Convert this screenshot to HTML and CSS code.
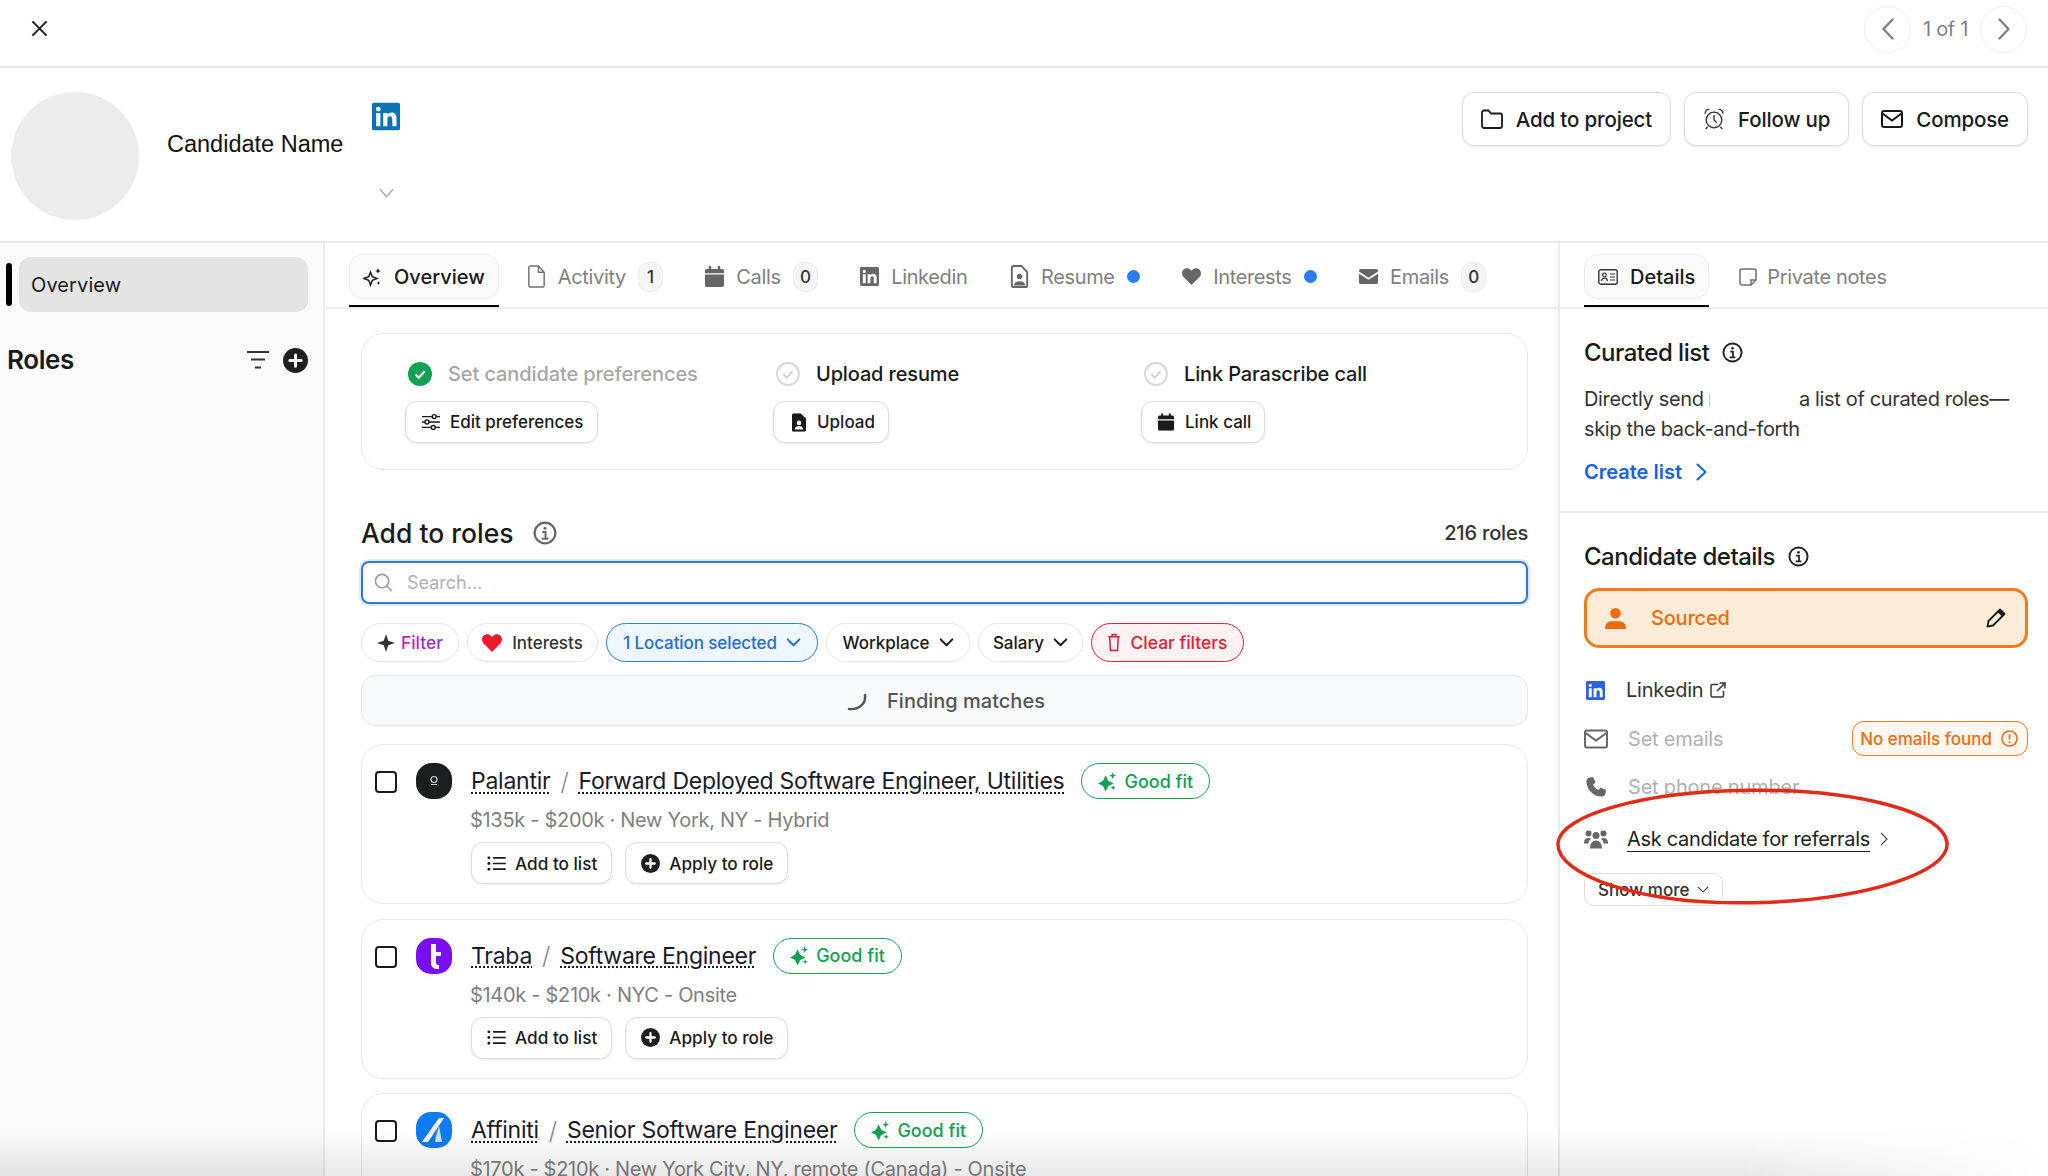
FILE: index.html
```html
<!DOCTYPE html>
<html lang="en">
<head>
<meta charset="utf-8">
<title>Candidate Name</title>
<link rel="stylesheet" href="styles.css">
</head>
<body>
<svg class="sprite" aria-hidden="true">
  <symbol id="i-list" viewBox="0 0 20 20"><g fill="none" stroke="currentColor" stroke-width="1.8" stroke-linecap="round"><path d="M7 4h12M7 10h12M7 16h12"/></g><g fill="currentColor"><circle cx="2" cy="4" r="1.5"/><circle cx="2" cy="10" r="1.5"/><circle cx="2" cy="16" r="1.5"/></g></symbol>
  <symbol id="i-plus" viewBox="0 0 20 20"><circle cx="10" cy="10" r="10" fill="#1f1f1f"/><path d="M10 5.500v9M5.500 10h9" stroke="#fff" stroke-width="2.400" stroke-linecap="round"/></symbol>
  <symbol id="i-spark" viewBox="0 0 20 20"><path fill="currentColor" d="M8 3.500l2.700 5.800 5.800 2.700-5.800 2.700L8 20.500l-2.700-5.800L0 12l5.300-2.700zM15.500 0l1 2.800 2.700 1-2.700 1-1 2.800-1-2.800-2.700-1 2.700-1zM16 14l.8 1.800 1.800.8-1.800.8L16 19l-.8-1.600-1.800-.8 1.800-.8z"/></symbol>
  <symbol id="i-info" viewBox="0 0 22 22"><circle cx="11" cy="11" r="9.500" fill="none" stroke="currentColor" stroke-width="2"/><circle cx="11" cy="6.600" r="1.400" fill="currentColor"/><path d="M8.500 10h3v6M8 16.200h6" fill="none" stroke="currentColor" stroke-width="1.800"/></symbol>
  <symbol id="i-cal" viewBox="0 0 20 22"><path fill="currentColor" d="M4 0h2.500v3h7V0H16v3h2a2 2 0 0 1 2 2v2.500H0V5a2 2 0 0 1 2-2h2zM0 9h20v11a2 2 0 0 1-2 2H2a2 2 0 0 1-2-2z"/></symbol>
  <symbol id="i-check" viewBox="0 0 24 24"><circle cx="12" cy="12" r="11" fill="none" stroke="#d6d6d6" stroke-width="1.800"/><path d="M7.500 12.500l3.200 3.200 6-6.500" fill="none" stroke="#c8c8c8" stroke-width="1.500"/></symbol>
  <symbol id="i-chev" viewBox="0 0 16 10"><path d="M1.500 1.500L8 8l6.500-6.500" fill="none" stroke="currentColor" stroke-width="2.200" stroke-linecap="round" stroke-linejoin="round"/></symbol>
  <symbol id="i-docperson" viewBox="0 0 18 24"><path fill="currentColor" d="M2.500 0H11l7 7v14.500a2.500 2.500 0 0 1-2.500 2.500h-13A2.500 2.500 0 0 1 0 21.500v-19A2.500 2.500 0 0 1 2.500 0z"/><circle cx="9" cy="12.500" r="3" fill="#fff"/><path fill="#fff" d="M3.500 21c.5-3 2.500-4.500 5.500-4.500s5 1.500 5.500 4.500z"/></symbol>
  <symbol id="i-li" viewBox="0 0 20 20"><path fill="currentColor" fill-rule="evenodd" d="M1.500 0h17A1.500 1.500 0 0 1 20 1.500v17a1.500 1.500 0 0 1-1.500 1.500h-17A1.500 1.500 0 0 1 0 18.500v-17A1.500 1.500 0 0 1 1.500 0zM3 7.500V17h3V7.500zM4.500 3a1.700 1.700 0 1 0 0 3.400 1.700 1.700 0 0 0 0-3.400zM8 7.500V17h3v-5c0-1.500.7-2.200 1.800-2.200s1.700.7 1.700 2.200v5h3v-5.800c0-2.700-1.400-4-3.500-4-1.300 0-2.400.6-3 1.500V7.500z"/></symbol>
</svg>

<div class="page">
  <header class="topbar">
    <svg class="close" viewBox="0 0 18 18"><path d="M1.500 1.500l15 15M16.500 1.500l-15 15" stroke="#1a1a1a" stroke-width="2" fill="none"/></svg>
    <nav class="pager">
      <span class="pager-btn"><svg class="pager-ico" viewBox="0 0 12 22"><path d="M10.500 1.500L1.500 11l9 9.500" fill="none" stroke="#808080" stroke-width="2.400" stroke-linecap="round" stroke-linejoin="round"/></svg></span>
      <span class="pager-text">1 of 1</span>
      <span class="pager-btn"><svg class="pager-ico" viewBox="0 0 12 22"><path d="M1.500 1.500l9 9.500-9 9.500" fill="none" stroke="#808080" stroke-width="2.400" stroke-linecap="round" stroke-linejoin="round"/></svg></span>
    </nav>
  </header>

  <section class="profile">
    <div class="avatar"></div>
    <div class="name">Candidate Name</div>
    <div class="profile-links">
      <svg class="li-logo" viewBox="0 0 20 20"><use href="#i-li"/></svg>
      <svg class="profile-chev" viewBox="0 0 16 10"><path d="M1 1l7 8 7-8" fill="none" stroke="#a8a8a8" stroke-width="1.300"/></svg>
    </div>
    <div class="profile-actions">
      <button class="btn-lg"><svg class="ico-22" viewBox="0 0 22 20"><path d="M1 3.500A2 2 0 0 1 3 1.500h4.500l2.500 3h9a2 2 0 0 1 2 2V17a2 2 0 0 1-2 2H3a2 2 0 0 1-2-2z" fill="none" stroke="#1a1a1a" stroke-width="1.800"/></svg>Add to project</button>
      <button class="btn-lg"><svg class="ico-22" viewBox="0 0 22 24"><g fill="none" stroke="#333" stroke-width="1.500"><circle cx="11" cy="13" r="8.500"/><path d="M11 7.500V13l3 3M1.500 6.500C1 3.500 3 1.500 6 1.500M20.500 6.500C21 3.500 19 1.500 16 1.500M4 20.500l-2 2.500M18 20.500l2 2.500"/></g></svg>Follow up</button>
      <button class="btn-lg"><svg class="ico-22" viewBox="0 0 22 18"><path d="M1 3a2 2 0 0 1 2-2h16a2 2 0 0 1 2 2v12a2 2 0 0 1-2 2H3a2 2 0 0 1-2-2zM1.500 3.500L11 10.500l9.500-7" fill="none" stroke="#1a1a1a" stroke-width="2"/></svg>Compose</button>
    </div>
  </section>

  <main class="columns">
    <aside class="sidebar">
      <div class="side-row">
        <span class="side-bar"></span>
        <span class="side-item">Overview</span>
      </div>
      <div class="roles-head">
        <h2 class="roles-title">Roles</h2>
        <svg class="filter-ico" viewBox="0 0 22 18"><path d="M0 1h22M4 8.500h14M8 16.500h6" stroke="#333" stroke-width="2" fill="none"/></svg>
        <svg class="plus-24" viewBox="0 0 20 20"><use href="#i-plus"/></svg>
      </div>
    </aside>

    <section class="center">
      <div class="tabs">
        <div class="tab-wrap tab-wrap-first"><span class="tab-pill"><svg class="tab-spark" viewBox="0 0 20 20"><path fill="none" stroke="#1a1a1a" stroke-width="1.500" d="M7.500 5l1.800 4.700 4.700 1.800-4.700 1.800L7.500 18l-1.800-4.700L1 11.500l4.700-1.800z"/><path fill="#1a1a1a" d="M15 1l.8 2.200L18 4l-2.200.8L15 7l-.8-2.200L12 4l2.200-.8zM15.500 14l.6 1.400 1.400.6-1.400.6-.6 1.400-.6-1.400-1.400-.6 1.400-.6z"/></svg>Overview</span></div>
        <span class="tab"><svg class="tab-ico" viewBox="0 0 18 24"><path d="M3 1h8l6 6.500V21a2 2 0 0 1-2 2H3a2 2 0 0 1-2-2V3a2 2 0 0 1 2-2zM11 1v6.500h6" fill="none" stroke="#707070" stroke-width="1.500"/></svg>Activity<span class="count">1</span></span>
        <span class="tab"><svg class="tab-ico" viewBox="0 0 20 22"><use href="#i-cal"/></svg>Calls<span class="count">0</span></span>
        <span class="tab"><svg class="tab-ico" viewBox="0 0 20 20"><use href="#i-li"/></svg>Linkedin</span>
        <span class="tab"><svg class="tab-ico" viewBox="0 0 18 24"><path d="M3 1h8l6 6.500V21a2 2 0 0 1-2 2H3a2 2 0 0 1-2-2V3a2 2 0 0 1 2-2z" fill="none" stroke="#666" stroke-width="2"/><circle cx="9" cy="12" r="2.800" fill="#666"/><path d="M3 21.500c.5-3.500 3-4.500 6-4.500s5.500 1 6 4.500z" fill="#666"/></svg>Resume<span class="dot"></span></span>
        <span class="tab"><svg class="tab-ico" viewBox="0 0 20 18"><path fill="currentColor" d="M10 18L1.600 9.500C-.5 7.300-.5 3.800 1.600 1.700c2.100-2.100 5.500-2 7.500.2L10 2.900l.9-1c2-2.200 5.400-2.300 7.500-.2 2.100 2.100 2.100 5.600 0 7.800z"/></svg>Interests<span class="dot"></span></span>
        <span class="tab tab-last"><svg class="tab-ico" viewBox="0 0 20 16"><path fill="currentColor" d="M2 0h16a2 2 0 0 1 2 2v.8l-10 6.400L0 2.800V2a2 2 0 0 1 2-2zM0 5l10 6.400L20 5v9a2 2 0 0 1-2 2H2a2 2 0 0 1-2-2z"/></svg>Emails<span class="count">0</span></span>
      </div>

      <div class="center-body">
        <div class="steps">
          <div class="step">
            <div class="step-head"><svg class="step-check" viewBox="0 0 24 24"><circle cx="12" cy="12" r="12" fill="#12a150"/><path d="M7.500 12.500l3.200 3.200 6-6.500" fill="none" stroke="#fff" stroke-width="2.200"/></svg><span class="step-text step-done">Set candidate preferences</span></div>
            <button class="btn-sm"><svg class="ico-18" viewBox="0 0 20 18"><g fill="none" stroke="#1a1a1a" stroke-width="1.600"><path d="M0 3h11M16 3h4M0 9h3M8 9h12M0 15h10M15 15h5"/><circle cx="13.500" cy="3" r="2.200"/><circle cx="5.500" cy="9" r="2.200"/><circle cx="12.500" cy="15" r="2.200"/></g></svg>Edit preferences</button>
          </div>
          <div class="step">
            <div class="step-head"><svg class="step-check" viewBox="0 0 24 24"><use href="#i-check"/></svg><span class="step-text">Upload resume</span></div>
            <button class="btn-sm btn-upload"><svg class="ico-14" viewBox="0 0 18 24"><use href="#i-docperson"/></svg>Upload</button>
          </div>
          <div class="step">
            <div class="step-head"><svg class="step-check" viewBox="0 0 24 24"><use href="#i-check"/></svg><span class="step-text">Link Parascribe call</span></div>
            <button class="btn-sm btn-link"><svg class="ico-16" viewBox="0 0 20 22"><use href="#i-cal"/></svg>Link call</button>
          </div>
        </div>

        <div class="add-head">
          <h2 class="h-add">Add to roles</h2>
          <svg class="info-grey" viewBox="0 0 22 22"><use href="#i-info"/></svg>
          <span class="roles-count">216 roles</span>
        </div>

        <div class="search">
          <svg class="search-ico" viewBox="0 0 20 20"><circle cx="8.500" cy="8.500" r="7" fill="none" stroke="#999" stroke-width="1.700"/><path d="M13.500 13.500l5.500 5.500" stroke="#999" stroke-width="1.700"/></svg>
          <span class="search-text">Search...</span>
        </div>

        <div class="chips">
          <span class="chip chip-filter"><svg class="chip-star" viewBox="0 0 16 16"><path fill="#333" d="M8 0l2 6 6 2-6 2-2 6-2-6-6-2 6-2z"/></svg><span class="filter-text">Filter</span></span>
          <span class="chip chip-int"><svg class="chip-heart" viewBox="0 0 20 18"><path fill="#f0192c" d="M10 18L1.600 9.500C-.5 7.300-.5 3.800 1.600 1.700c2.100-2.100 5.500-2 7.500.2L10 2.900l.9-1c2-2.200 5.400-2.300 7.500-.2 2.100 2.100 2.100 5.600 0 7.800z"/></svg>Interests</span>
          <span class="chip chip-loc">1 Location selected<svg class="chip-chev" viewBox="0 0 16 10"><use href="#i-chev"/></svg></span>
          <span class="chip chip-work">Workplace<svg class="chip-chev" viewBox="0 0 16 10"><use href="#i-chev"/></svg></span>
          <span class="chip chip-sal">Salary<svg class="chip-chev" viewBox="0 0 16 10"><use href="#i-chev"/></svg></span>
          <span class="chip chip-clear"><svg class="chip-trash" viewBox="0 0 14 20"><path d="M1 4h12M5 4V1.500h4V4M2.500 4l.8 14.500h7.400L11.500 4" fill="none" stroke="#e01e36" stroke-width="1.600"/></svg>Clear filters</span>
        </div>

        <div class="finding">
          <svg class="spinner" viewBox="0 0 20 20"><path d="M18 2c1 8-5 15-16 14" fill="none" stroke="#555" stroke-width="2.400" stroke-linecap="round"/></svg>
          <span>Finding matches</span>
        </div>

        <article class="role">
          <span class="box"></span>
          <svg class="logo" viewBox="0 0 36 36"><rect width="36" height="36" rx="16" fill="#1c1f20"/><circle cx="18" cy="16.500" r="3" fill="none" stroke="#cfd3d3" stroke-width="1.200"/><path d="M15 21.500h6" stroke="#cfd3d3" stroke-width="1"/></svg>
          <div class="role-main">
            <div class="role-title"><a class="co">Palantir</a><span class="slash">/</span><a class="co job">Forward Deployed Software Engineer, Utilities</a><span class="fit"><svg class="fit-ico" viewBox="0 0 20 20"><use href="#i-spark"/></svg>Good fit</span></div>
            <div class="role-sub">$135k - $200k · New York, NY - Hybrid</div>
            <div class="role-acts">
              <button class="btn-role"><svg class="ico-19" viewBox="0 0 20 20"><use href="#i-list"/></svg>Add to list</button>
              <button class="btn-role"><svg class="ico-19" viewBox="0 0 20 20"><use href="#i-plus"/></svg>Apply to role</button>
            </div>
          </div>
        </article>

        <article class="role">
          <span class="box"></span>
          <svg class="logo" viewBox="0 0 36 36"><rect width="36" height="36" rx="15" fill="#7a0df2"/><path d="M15 6h5v8h5v4h-5v7c0 1.500 1.500 2 3 2v4c-5 .5-8-2-8-6z" fill="#fff"/></svg>
          <div class="role-main">
            <div class="role-title"><a class="co">Traba</a><span class="slash">/</span><a class="co job">Software Engineer</a><span class="fit"><svg class="fit-ico" viewBox="0 0 20 20"><use href="#i-spark"/></svg>Good fit</span></div>
            <div class="role-sub">$140k - $210k · NYC - Onsite</div>
            <div class="role-acts">
              <button class="btn-role"><svg class="ico-19" viewBox="0 0 20 20"><use href="#i-list"/></svg>Add to list</button>
              <button class="btn-role"><svg class="ico-19" viewBox="0 0 20 20"><use href="#i-plus"/></svg>Apply to role</button>
            </div>
          </div>
        </article>

        <article class="role">
          <span class="box"></span>
          <svg class="logo" viewBox="0 0 36 36"><rect width="36" height="36" rx="15" fill="#0f7bf0"/><path d="M23 6h5L12 30H6z" fill="#fff"/><path d="M23 14l3 16h-7l1-6z" fill="#cfe3fb"/></svg>
          <div class="role-main">
            <div class="role-title"><a class="co">Affiniti</a><span class="slash">/</span><a class="co job">Senior Software Engineer</a><span class="fit"><svg class="fit-ico" viewBox="0 0 20 20"><use href="#i-spark"/></svg>Good fit</span></div>
            <div class="role-sub">$170k - $210k · New York City, NY, remote (Canada) - Onsite</div>
          </div>
        </article>
      </div>
    </section>

    <aside class="details">
      <div class="tabs">
        <div class="tab-wrap tab-wrap-details"><span class="tab-pill tab-pill-details"><svg class="det-ico" viewBox="0 0 20 16"><rect x=".8" y=".8" width="18.400" height="14.400" rx="2" fill="none" stroke="#333" stroke-width="1.400"/><circle cx="6.500" cy="6" r="1.800" fill="none" stroke="#333" stroke-width="1.200"/><path d="M3.500 12c.3-2 1.500-2.800 3-2.800s2.700.8 3 2.800M12 5h5M12 8h5M12 11h5" fill="none" stroke="#333" stroke-width="1.200"/></svg>Details</span></div>
        <span class="tab"><svg class="tab-ico" viewBox="0 0 18 18"><path d="M3 1h12a2 2 0 0 1 2 2v9l-5 5H3a2 2 0 0 1-2-2V3a2 2 0 0 1 2-2zM17 12h-5v5" fill="none" stroke="#707070" stroke-width="1.500"/></svg>Private notes</span>
      </div>

      <div class="curated">
        <div class="h-row"><h2 class="h-det">Curated list</h2><svg class="info-dark" viewBox="0 0 22 22"><use href="#i-info"/></svg></div>
        <p class="curated-text">Directly send <span class="redact"></span>a list of curated roles—<br>skip the back-and-forth</p>
        <a class="create">Create list<svg class="create-chev" viewBox="0 0 11 18"><path d="M1.500 1.500L9.500 9l-8 7.500" fill="none" stroke="#1463e0" stroke-width="2" stroke-linecap="round" stroke-linejoin="round"/></svg></a>
      </div>

      <div class="cand">
        <div class="h-row"><h2 class="h-det">Candidate details</h2><svg class="info-dark" viewBox="0 0 22 22"><use href="#i-info"/></svg></div>
        <div class="status">
          <svg class="status-ico" viewBox="0 0 22 22"><circle cx="11" cy="5.500" r="5.500" fill="#f26a0f"/><path d="M0 22c0-5 3-8 6-8h10c3 0 6 3 6 8z" fill="#f26a0f"/></svg>
          <span class="status-text">Sourced</span>
          <svg class="pencil" viewBox="0 0 20 20"><path d="M14 1.500l4.500 4.500L7 17.500l-5.500 1 1-5.500z" fill="none" stroke="#1a1a1a" stroke-width="1.800" stroke-linejoin="round"/><path d="M14 1.500l4.500 4.500-2.500 2.500L11.500 4z" fill="#1a1a1a"/></svg>
        </div>
        <div class="info-row row-li">
          <svg class="li-blue" viewBox="0 0 20 20"><use href="#i-li"/></svg>
          <span class="row-dark">Linkedin</span>
          <svg class="ext" viewBox="0 0 16 16"><path d="M8 2.500H2.500a1.500 1.500 0 0 0-1.500 1.500v9.500A1.500 1.500 0 0 0 2.500 15H12a1.500 1.500 0 0 0 1.500-1.500V9M9.500 1H15v5.500M15 1L7 9" fill="none" stroke="#333" stroke-width="1.500"/></svg>
        </div>
        <div class="info-row row-mail">
          <svg class="row-ico" viewBox="0 0 24 19"><path d="M1 3a2 2 0 0 1 2-2h18a2 2 0 0 1 2 2v13a2 2 0 0 1-2 2H3a2 2 0 0 1-2-2zM1.500 3.500L12 11l10.500-7.500" fill="none" stroke="#666" stroke-width="2"/></svg>
          <span class="row-muted">Set emails</span>
          <span class="warn">No emails found<svg class="warn-ico" viewBox="0 0 18 18"><circle cx="9" cy="9" r="8" fill="none" stroke="#f26a0f" stroke-width="1.600"/><path d="M9 4.500v5.500M9 12v1.800" stroke="#f26a0f" stroke-width="1.800"/></svg></span>
        </div>
        <div class="info-row row-phone">
          <svg class="row-ico" viewBox="0 0 24 24"><path fill="#666" d="M5 .5l3.500-.5 3 6.500-3 2.500c1 3 3.500 5.500 6.500 6.500l2.500-3 6.500 3-.5 3.500c-.3 2.500-2 4.500-4.500 4.500C9 23.500.5 15 .5 5 .5 2.500 2.500.8 5 .5z"/></svg>
          <span class="row-muted">Set phone number</span>
        </div>
        <div class="info-row row-ask">
          <svg class="row-ico" viewBox="0 0 24 19"><g fill="#666"><circle cx="4.500" cy="4" r="3"/><circle cx="19.500" cy="4" r="3"/><circle cx="12" cy="6" r="3.500"/><path d="M0 13c0-3 2-4.500 4.500-4.500 1 0 2 .3 2.800.8C5.500 10.500 4.500 12 4.500 14H0zM24 13c0-3-2-4.500-4.500-4.500-1 0-2 .3-2.800.8 1.800 1.200 2.800 2.700 2.800 4.700H24zM6 19c0-5 2.500-8 6-8s6 3 6 8z"/></g></svg>
          <a class="ask">Ask candidate for referrals</a>
          <svg class="ask-chev" viewBox="0 0 8 14"><path d="M1 1l6 6-6 6" fill="none" stroke="#555" stroke-width="1.300"/></svg>
        </div>
        <button class="show-more">Show more<svg class="show-chev" viewBox="0 0 14 8"><path d="M1 1l6 6 6-6" fill="none" stroke="#333" stroke-width="1.300"/></svg></button>
      </div>
    </aside>
  </main>

  <svg class="annot" viewBox="0 0 400 124"><path d="M4 58C6 30 90 6 196 5c110-1 196 22 199 53 3 30-85 58-197 60C86 120 2 90 4 58z" fill="none" stroke="#e22a17" stroke-width="3.500"/></svg>
  <div class="fade"></div>
</div>
</body>
</html>
```

FILE: styles.css
```css
* { box-sizing: border-box; }
html, body { margin: 0; padding: 0; overflow: hidden; }
body { font-family: "Inter", "Liberation Sans", sans-serif; color: #1a1a1a; background: #fff; }
.sprite { display: none; }
h2, p { margin: 0; font-weight: 500; }
button { font-family: inherit; background: #fff; color: #1a1a1a; cursor: pointer; }
svg { flex: none; display: block; }

.page { position: relative; width: 2048px; height: 1176px; overflow: hidden; background: #fff; }

.topbar { height: 68px; border-bottom: 2px solid #e9e9e9; display: flex; align-items: center; justify-content: space-between; padding: 0 21px 0 31px; }
.close { width: 17px; height: 17px; margin-top: -10px; }
.pager { display: flex; align-items: center; gap: 12px; margin-top: -8px; }
.pager-btn { width: 47px; height: 47px; border: 1.500px solid #eeeeee; border-radius: 50%; display: flex; align-items: center; justify-content: center; }
.pager-ico { width: 12px; height: 22px; }
.pager-text { font-size: 20px; color: #808080; width: 45px; white-space: nowrap; letter-spacing: -0.3px; }

.profile { height: 175px; border-bottom: 2px solid #e9e9e9; display: flex; position: relative; padding: 24px 20px 0 11px; }
.avatar { width: 128px; height: 128px; border-radius: 50%; background: #ececec; }
.name { font-family: "Liberation Sans", Arial, sans-serif; font-size: 23.500px; margin: 38px 0 0 28px; line-height: 28px; color: #111; }
.profile-links { margin: 10px 0 0 29px; }
.li-logo { width: 28px; height: 29px; color: #0a72b5; }
.profile-chev { width: 15px; height: 10px; margin: 57px 0 0 7px; }
.profile-actions { margin-left: auto; display: flex; gap: 13px; }
.btn-lg { height: 54px; border: 1.500px solid #dcdcdc; border-radius: 12px; font-size: 20.500px; font-weight: 500; display: flex; align-items: center; gap: 13px; padding: 0 18px; box-shadow: 0 1px 2px rgba(0,0,0,.08); white-space: nowrap; letter-spacing: -0.15px; }
.ico-22 { width: 22px; height: 22px; }

.columns { display: flex; height: 933px; }
.sidebar { width: 325px; background: #fafafa; border-right: 2px solid #ececec; padding: 14px 15px 0 6px; }
.side-row { display: flex; align-items: center; gap: 7px; }
.side-bar { width: 6px; height: 43px; border-radius: 3px; background: #000; }
.side-item { flex: 1; height: 55px; border-radius: 12px; background: #e4e4e4; display: flex; align-items: center; padding-left: 12px; font-size: 20px; letter-spacing: 0.1px; }
.roles-head { display: flex; align-items: center; margin-top: 31px; padding-left: 1px; }
.roles-title { font-size: 26px; font-weight: 600; letter-spacing: -0.4px; flex: 1; line-height: 34px; }
.filter-ico { width: 22px; height: 18px; margin-right: 14px; }
.plus-24 { width: 25px; height: 25px; }

.center { width: 1233px; overflow: hidden; }
.tabs { height: 66px; border-bottom: 2px solid #ececec; display: flex; align-items: flex-start; padding: 11px 0 0 24px; }
.tab-wrap { height: 53px; margin-right: 28px; border-bottom: 2px solid #000; flex: none; }
.tab-pill { height: 45px; background: #fafafa; border: 1.500px solid #ececec; border-radius: 14px; display: flex; align-items: center; gap: 11px; padding: 0 13px; font-size: 20px; font-weight: 500; white-space: nowrap; }
.tab-spark { width: 20px; height: 20px; }
.tab { height: 45px; display: flex; align-items: center; gap: 12px; font-size: 20px; color: #808080; margin-right: 42.500px; white-space: nowrap; letter-spacing: -0.35px; }
.tab-ico { width: 19px; height: 23px; color: #666; }
.count { width: 25px; height: 30px; border-radius: 11px; border: 1px solid #ececec; background: #f5f5f5; color: #333; font-size: 17px; font-weight: 500; display: flex; align-items: center; justify-content: center; }
.dot { width: 13px; height: 13px; border-radius: 50%; background: #2a7bf6; }
.tab-last { margin-right: 0; }

.center-body { padding: 24px 30px 0 36px; }
.steps { height: 137px; border: 1.500px solid #e8e8e8; border-radius: 22px; display: flex; padding: 27px 0 0 43px; }
.step { width: 368px; }
.step-head { display: flex; align-items: center; gap: 16px; padding-left: 3px; height: 25px; }
.step-check { width: 24px; height: 24px; }
.step-text { font-size: 20px; font-weight: 500; letter-spacing: -0.15px; white-space: nowrap; }
.step-done { color: #a6a6a6; letter-spacing: -0.1px; }
.btn-sm { margin-top: 15px; height: 42px; border: 1.500px solid #dcdcdc; border-radius: 12px; font-size: 17px; font-weight: 500; display: flex; align-items: center; gap: 10px; padding: 0 13px 0 16px; box-shadow: 0 1px 2px rgba(0,0,0,.08); white-space: nowrap; }
.btn-upload { padding-left: 18px; gap: 11px; }
.btn-link { gap: 11px; }
.ico-18 { width: 18px; height: 18px; }
.ico-14 { width: 14px; height: 19px; color: #1a1a1a; }
.ico-16 { width: 16px; height: 18px; color: #1a1a1a; }

.add-head { display: flex; align-items: center; margin-top: 46px; height: 34px; }
.h-add { font-size: 26.500px; font-weight: 500; }
.info-grey { width: 24px; height: 24px; color: #666; margin-left: 19px; }
.roles-count { margin-left: auto; font-size: 20px; font-weight: 500; color: #333; letter-spacing: -0.2px; }

.search { margin-top: 11px; height: 43px; border: 2px solid #2f78d8; border-radius: 8px; box-shadow: 0 0 0 2px #dbe9fb; display: flex; align-items: center; padding-left: 11px; gap: 14px; }
.search-ico { width: 19px; height: 19px; }
.search-text { font-size: 18px; color: #b0b0b0; }

.chips { display: flex; gap: 8px; margin-top: 19px; }
.chip { height: 39px; border: 1.500px solid #e5e5e5; border-radius: 20px; display: flex; align-items: center; justify-content: center; font-size: 17px; font-weight: 500; white-space: nowrap; gap: 7px; }
.chip-filter { width: 98px; gap: 6px; font-size: 17.500px; }
.chip-int { width: 131px; gap: 10px; color: #333; }
.chip-loc { width: 212px; background: #eef6ff; border-color: #2b7de0; color: #1f6fd6; letter-spacing: -0.1px; gap: 9px; }
.chip-work { width: 144px; gap: 9px; }
.chip-sal { width: 105px; gap: 9px; }
.chip-clear { width: 153px; background: #fff2f3; border-color: #e01e36; color: #e01e36; font-size: 17.500px; gap: 9px; }
.chip-star { width: 18px; height: 18px; }
.filter-text { background: linear-gradient(90deg, #e0119d, #7b2ff0); -webkit-background-clip: text; background-clip: text; color: transparent; }
.chip-heart { width: 20px; height: 18px; }
.chip-chev { width: 15px; height: 9px; }
.chip-trash { width: 14px; height: 19px; }

.finding { margin-top: 13px; height: 51px; border: 1.500px solid #e8e8e8; border-radius: 14px; background: #f7f9fa; display: flex; align-items: center; justify-content: center; gap: 20px; padding-left: 3px; font-size: 20px; font-weight: 500; color: #555; }
.spinner { width: 20px; height: 20px; margin-top: 4px; }

.role { margin-top: 18px; height: 160px; border: 1.500px solid #e8e8e8; border-radius: 22px; display: flex; align-items: flex-start; padding: 18px 0 0 13px; }
.role + .role { margin-top: 14.500px; }
.box { width: 22px; height: 22px; border: 2.500px solid #1a1a1a; border-radius: 4px; margin: 8px 19px 0 0; flex: none; }
.logo { width: 36px; height: 36px; margin-right: 19px; }
.role-main { flex: 1; }
.role-title { height: 36px; display: flex; align-items: center; font-size: 23px; letter-spacing: -0.25px; white-space: nowrap; }
.co { text-decoration: underline dotted; text-decoration-thickness: 2px; text-underline-offset: 3px; color: #1a1a2a; }
.slash { color: #888; margin: 0 10px; font-size: 24px; font-weight: 300; }
.fit { margin-left: 17px; height: 36px; border: 1.500px solid #12a150; border-radius: 18px; color: #12a150; font-size: 18px; font-weight: 500; display: flex; align-items: center; gap: 7px; padding: 0 16px; letter-spacing: 0; }
.fit-ico { width: 19px; height: 19px; }
.role-sub { margin-top: 8px; font-size: 20px; line-height: 26px; color: #808080; letter-spacing: -0.3px; white-space: nowrap; margin-left: -1px; }
.role-acts { display: flex; gap: 13px; margin-top: 9px; }
.btn-role { height: 42px; border: 1.500px solid #dcdcdc; border-radius: 12px; font-size: 17.200px; font-weight: 500; display: flex; align-items: center; gap: 9px; padding: 0 14px 0 15px; box-shadow: 0 1px 2px rgba(0,0,0,.08); white-space: nowrap; }
.ico-19 { width: 19px; height: 19px; color: #1a1a1a; }

.details { flex: 1; border-left: 2px solid #ececec; }
.details .tabs { padding-left: 24px; }
.tab-wrap-details { margin-right: 30px; }
.tab-pill-details { gap: 12px; }
.det-ico { width: 20px; height: 16px; }
.details .tab { gap: 10px; }
.details .tab-ico { width: 18px; height: 18px; }

.curated { padding: 26px 20px 0 24px; height: 204px; border-bottom: 2px solid #ececec; }
.h-row { display: flex; align-items: center; gap: 13px; height: 34px; }
.h-det { font-size: 24px; font-weight: 500; letter-spacing: -0.5px; white-space: nowrap; }
.info-dark { width: 21px; height: 21px; color: #222; }
.curated-text { margin-top: 15px; font-size: 20px; font-weight: 400; line-height: 30px; color: #333; letter-spacing: -0.35px; white-space: nowrap; }
.redact { display: inline-block; width: 90px; height: 13px; border-left: 1.500px solid #cccccc; }
.create { display: flex; align-items: center; gap: 14px; margin-top: 13px; font-size: 20px; font-weight: 600; color: #1463e0; height: 30px; }
.create-chev { width: 11px; height: 18px; }

.cand { padding: 26px 20px 0 24px; }
.status { margin-top: 15px; height: 60px; border: 3px solid #f27a1a; border-radius: 15px; background: #fdecd8; display: flex; align-items: center; padding: 0 19px 0 18px; }
.status-ico { width: 21px; height: 21px; }
.status-text { margin-left: 25px; font-size: 20px; font-weight: 500; color: #f26a0f; flex: 1; letter-spacing: -0.2px; }
.pencil { width: 20px; height: 20px; }

.info-row { display: flex; align-items: center; font-size: 20px; white-space: nowrap; }
.row-li { margin-top: 27px; height: 30px; padding-left: 2px; }
.li-blue { width: 19px; height: 19px; color: #2f62e0; margin-right: 21px; }
.row-dark { color: #333; letter-spacing: -0.2px; }
.ext { width: 16px; height: 16px; margin-left: 7px; }
.row-mail { margin-top: 16px; height: 35px; }
.row-ico { width: 24px; height: 20px; margin-right: 20px; }
.row-muted { color: #b0b0b0; letter-spacing: -0.2px; }
.warn { margin-left: auto; height: 35px; border: 1.500px solid #f27a1a; border-radius: 12px; background: #fff8f0; color: #f26a0f; font-size: 17px; font-weight: 500; display: flex; align-items: center; gap: 9px; padding: 0 9px 0 7px; }
.warn-ico { width: 17px; height: 17px; }
.row-phone { margin-top: 16px; height: 30px; }
.row-ask { margin-top: 22px; height: 30px; }
.ask { color: #222; text-decoration: underline; text-underline-offset: 5px; text-decoration-thickness: 1px; letter-spacing: -0.3px; margin-left: -1px; }
.ask-chev { width: 8px; height: 14px; margin-left: 10px; }
.show-more { margin-top: 19px; height: 33px; width: 139px; border: 1.500px solid #dcdcdc; border-radius: 10px; font-size: 17px; font-weight: 500; display: flex; align-items: center; gap: 8px; padding: 0 0 0 13px; white-space: nowrap; color: #333; }
.show-chev { width: 12px; height: 7px; }

.annot { position: absolute; left: 1554px; top: 785px; width: 398px; height: 124px; }
.fade { position: absolute; left: 0; right: 0; bottom: 0; height: 46px; background: linear-gradient(to bottom, rgba(0,0,0,0), rgba(0,0,0,.09)); -webkit-mask-image: linear-gradient(to right, #000 85%, transparent 100%); mask-image: linear-gradient(to right, #000 85%, transparent 100%); }
```
